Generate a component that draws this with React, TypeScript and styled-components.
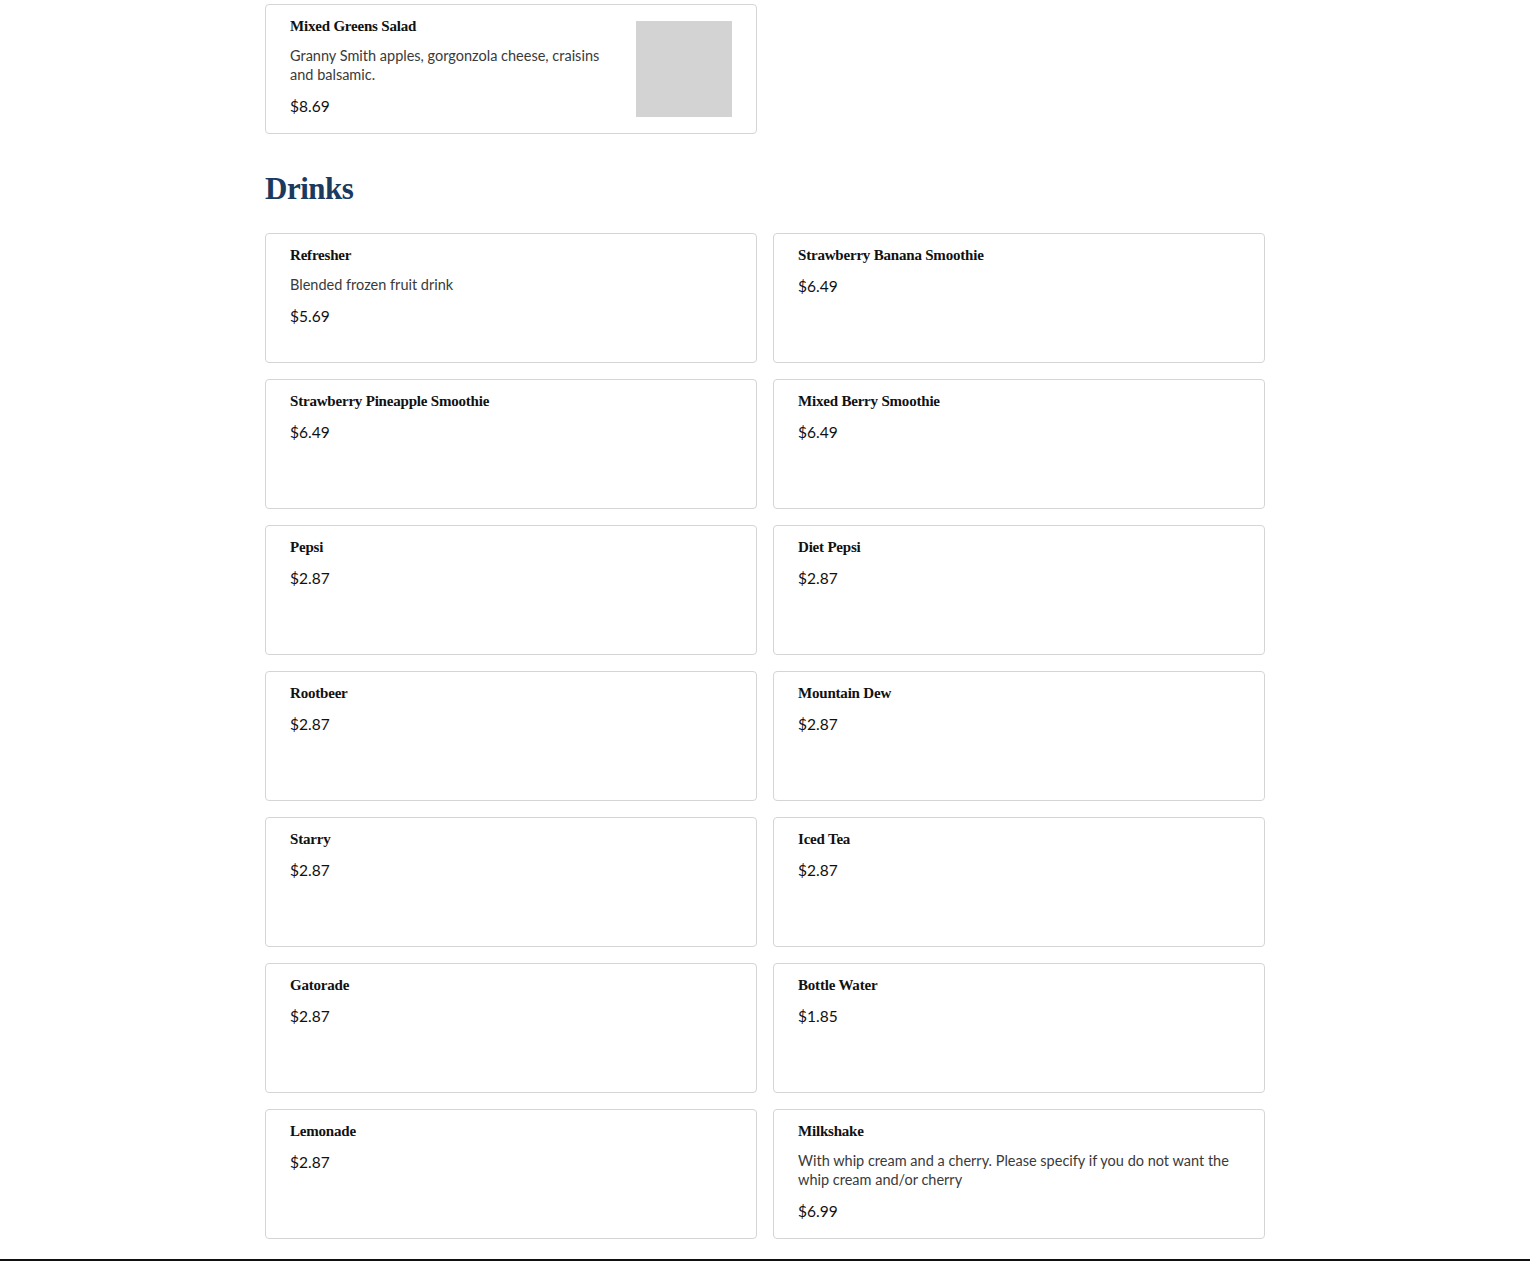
import React, { ReactElement } from 'react';
import styled, { createGlobalStyle } from 'styled-components';

interface Item {
  name: string;
  description?: string;
  price: string;
}

const drinks: Item[] = [
  { name: 'Refresher', description: 'Blended frozen fruit drink', price: '$5.69' },
  { name: 'Strawberry Banana Smoothie', price: '$6.49' },
  { name: 'Strawberry Pineapple Smoothie', price: '$6.49' },
  { name: 'Mixed Berry Smoothie', price: '$6.49' },
  { name: 'Pepsi', price: '$2.87' },
  { name: 'Diet Pepsi', price: '$2.87' },
  { name: 'Rootbeer', price: '$2.87' },
  { name: 'Mountain Dew', price: '$2.87' },
  { name: 'Starry', price: '$2.87' },
  { name: 'Iced Tea', price: '$2.87' },
  { name: 'Gatorade', price: '$2.87' },
  { name: 'Bottle Water', price: '$1.85' },
  { name: 'Lemonade', price: '$2.87' },
  {
    name: 'Milkshake',
    description: 'With whip cream and a cherry. Please specify if you do not want the whip cream and/or cherry',
    price: '$6.99',
  },
];

const GlobalStyle = createGlobalStyle`
  html, body {
    margin: 0;
    padding: 0;
    background: #ffffff;
  }
  * {
    box-sizing: border-box;
  }
`;

const Page = styled.div`
  min-height: 1261px;
  display: flex;
  flex-direction: column;
`;

const Main = styled.main`
  width: 1000px;
  margin: 0 auto;
  padding-top: 4px;
  padding-bottom: 20px;
  flex: 1;
`;

const Grid = styled.div`
  display: grid;
  grid-template-columns: repeat(2, 492px);
  gap: 16px;
`;

const Card = styled.div`
  min-height: 130px;
  border: 1px solid #d5d5d5;
  border-radius: 4px;
  background: #ffffff;
  padding: 12px 24px 16px;

  display: flex;
  align-items: center;
  gap: 24px;
`;

const CardBody = styled.div`
  flex: 1;
  align-self: flex-start;
  display: flex;
  flex-direction: column;
`;

const ItemName = styled.h3`
  margin: 0 0 11px;
  font-family: "Liberation Serif", "DejaVu Serif", serif;
  font-weight: bold;
  font-size: 15px;
  line-height: 18px;
  color: #111111;
  letter-spacing: -0.2px;
`;

const ItemDescription = styled.p`
  margin: 0 0 11px;
  font-family: Lato, "Noto Sans", sans-serif;
  font-size: 14.5px;
  line-height: 19px;
  color: #3a3a3a;
`;

const ItemPrice = styled.span`
  font-family: Lato, "Noto Sans", sans-serif;
  font-size: 15.5px;
  line-height: 22px;
  color: #111111;
`;

const Thumb = styled.div`
  width: 96px;
  height: 96px;
  margin-top: 4px;
  flex-shrink: 0;
  background: #d3d3d3;
`;

const SectionTitle = styled.h2`
  margin: 36px 0 25px;
  font-family: "Liberation Serif", "DejaVu Serif", serif;
  font-weight: bold;
  font-size: 31px;
  line-height: 38px;
  color: #1b3a5e;
  letter-spacing: -0.5px;
`;

const Footer = styled.footer`
  height: 2px;
  background: #111111;
`;

function MenuCard(props: { item: Item; image?: boolean }): ReactElement {
  const { item, image } = props;
  return (
    <Card>
      <CardBody>
        <ItemName>{item.name}</ItemName>
        {item.description && <ItemDescription>{item.description}</ItemDescription>}
        <ItemPrice>{item.price}</ItemPrice>
      </CardBody>
      {image && <Thumb />}
    </Card>
  );
}

function App(): ReactElement {
  return (
    <Page>
      <GlobalStyle />
      <Main>
        <Grid>
          <MenuCard
            image
            item={{
              name: 'Mixed Greens Salad',
              description: 'Granny Smith apples, gorgonzola cheese, craisins and balsamic.',
              price: '$8.69',
            }}
          />
        </Grid>
        <SectionTitle>Drinks</SectionTitle>
        <Grid>
          {drinks.map((d) => (
            <MenuCard key={d.name} item={d} />
          ))}
        </Grid>
      </Main>
      <Footer />
    </Page>
  );
}

export default App;
